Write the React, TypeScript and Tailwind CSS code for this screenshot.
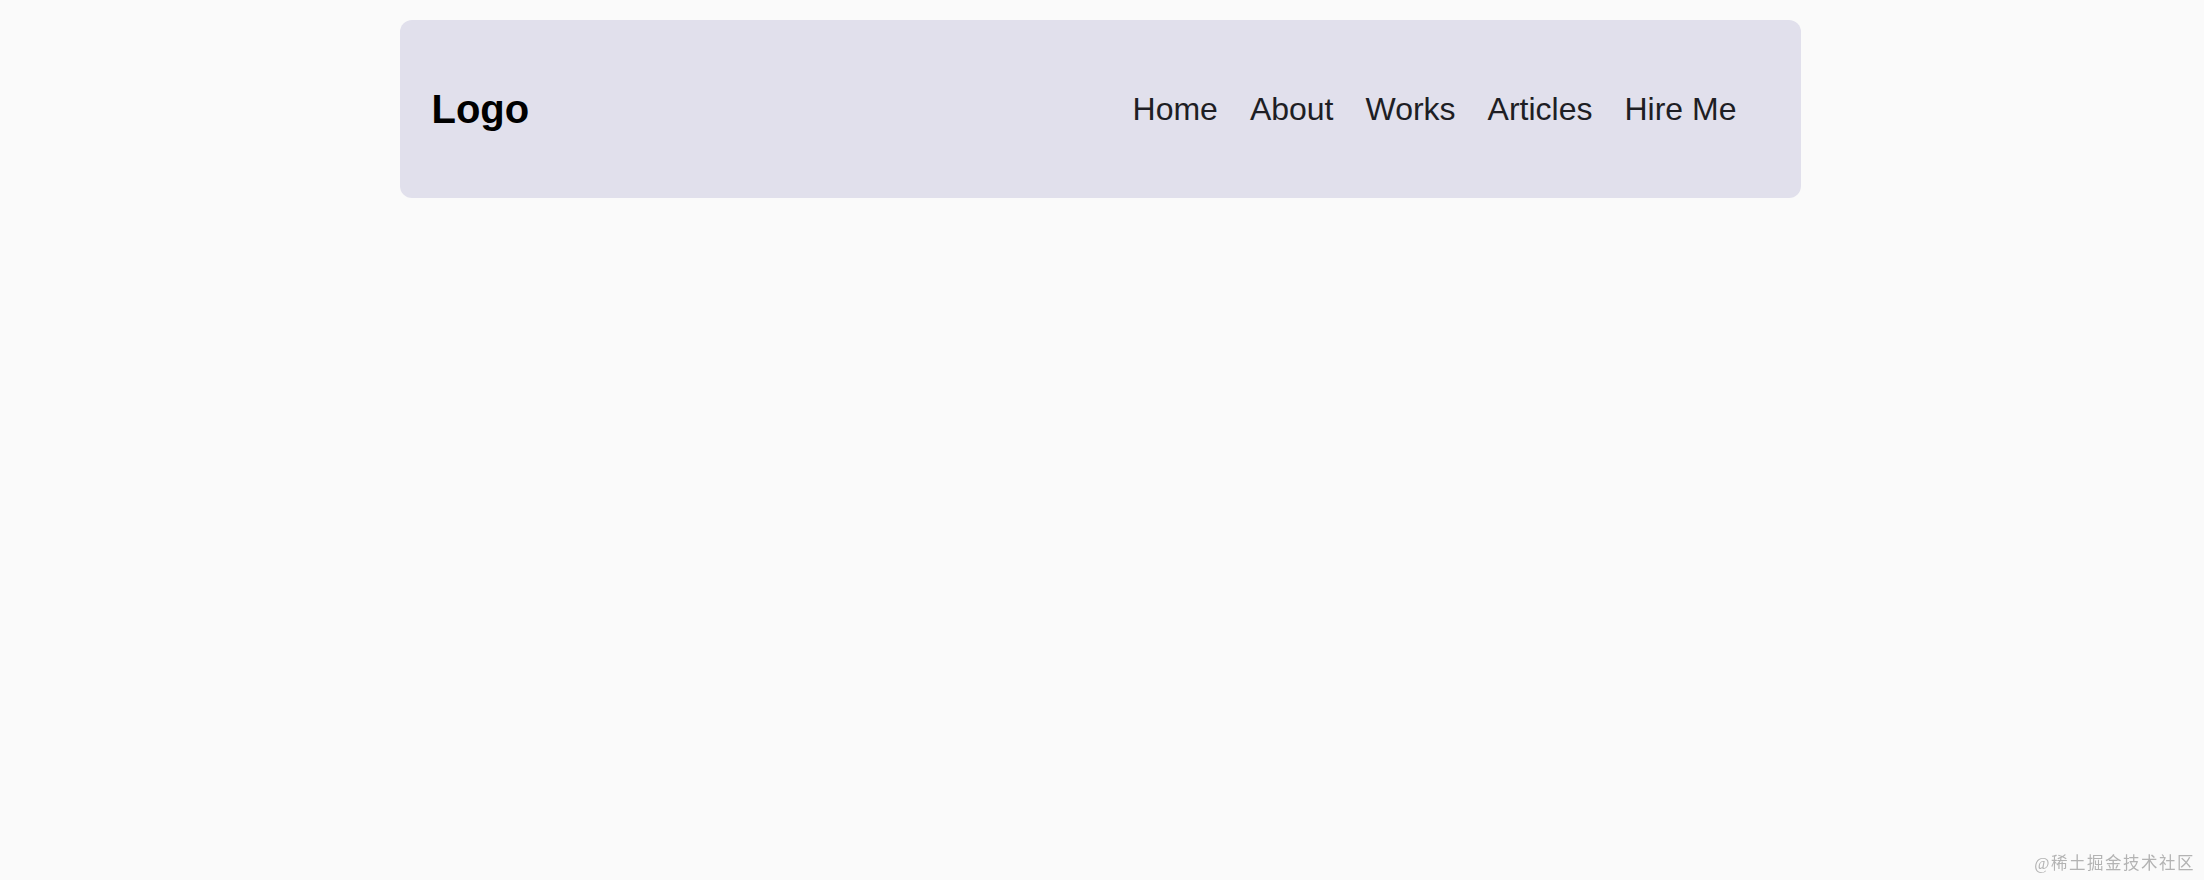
import React from "react";

export default function App() {
  const items = ["Home", "About", "Works", "Articles", "Hire Me"];
  return (
    <div
      className="min-h-screen w-full bg-[#fafafa] pt-5 pr-[4px]"
      style={{ fontFamily: '"Liberation Sans", Arial, sans-serif' }}
    >
      <header className="mx-auto flex h-[178px] w-[1401px] items-center justify-between rounded-xl bg-[#e1e0ec] px-8">
        <div className="text-[40px] font-bold leading-none text-black">Logo</div>
        <nav className="mr-8 flex items-center gap-8">
          {items.map((it) => (
            <a key={it} className="text-[32px] leading-none text-[#1e1e24]">
              {it}
            </a>
          ))}
        </nav>
      </header>
      <div
        className="fixed bottom-[8px] right-[9px] text-[16.5px] leading-none tracking-[1.5px] text-[#b3b3b3]"
        style={{ fontFamily: '"Liberation Serif", "Noto Sans CJK SC", serif' }}
      >
        @稀土掘金技术社区
      </div>
    </div>
  );
}
